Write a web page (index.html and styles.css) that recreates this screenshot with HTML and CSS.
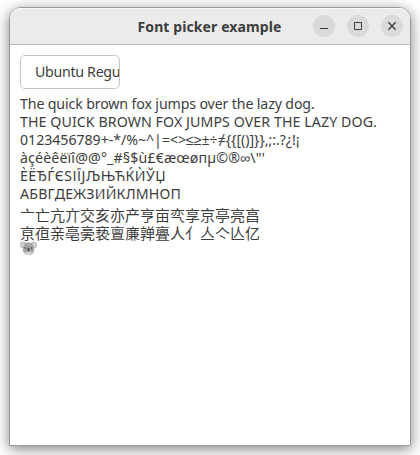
FILE: index.html
```html
<!DOCTYPE html>
<html lang="en">
<head>
<meta charset="utf-8">
<title>Font picker example</title>
<link rel="stylesheet" href="styles.css">
</head>
<body>
<main class="window">
  <header class="titlebar">
    <h1 class="title">Font picker example</h1>
    <div class="controls">
      <button class="control" aria-label="Minimize"><svg viewBox="0 0 22 22"><path d="M7 13.5h8"/></svg></button>
      <button class="control" aria-label="Maximize"><svg viewBox="0 0 22 22"><path d="M7.500 7.500h7v7h-7z"/></svg></button>
      <button class="control" aria-label="Close"><svg viewBox="0 0 22 22"><path d="M7.300 7.300l7.400 7.400M14.700 7.300l-7.400 7.400" stroke-width="1.4"/></svg></button>
    </div>
  </header>
  <section class="content">
    <button class="picker"><span class="picker-label">Ubuntu Regu</span></button>
    <div class="sample">
      <p class="line lower">The quick brown fox jumps over the lazy dog.</p>
      <p class="line upper">THE QUICK BROWN FOX JUMPS OVER THE LAZY DOG.</p>
      <p class="line digits">0123456789+-*/%~^|=&lt;&gt;≤≥±÷≠{{[()]}},;:.?¿!¡</p>
      <p class="line accents">àçéèêëïî@@°_#§$ù£€æœøпµ©®∞\"'</p>
      <p class="line cyrillic-ext">ÈËЂЃЄЅІЇЈЉЊЋЌЍЎЏ</p>
      <p class="line cyrillic">АБВГДЕЖЗИЙКЛМНОП</p>
      <p class="line han han-first">亠亡亢亣交亥亦产亨亩亪享京亭亮亯</p>
      <p class="line han">亰亱亲亳亴亵亶亷亸亹人亻亼亽亾亿</p>
    </div>
    <svg class="koala" viewBox="0 0 17 14" role="img" aria-label="Koala">
      <circle cx="3.4" cy="4" r="3.300" fill="#bababa"/><circle cx="13.600" cy="4" r="3.300" fill="#bababa"/>
      <circle cx="3.200" cy="4" r="2" fill="#dcd6d6"/><circle cx="13.800" cy="4" r="2" fill="#dcd6d6"/>
      <path d="M8.500 1.500C4.800 1.500 2.800 4.200 2.800 8c0 3.500 2.200 5.800 5.700 5.800s5.700-2.300 5.700-5.800c0-3.800-2-6.500-5.700-6.500z" fill="#a6a6a6"/>
      <path d="M5 11.200q3.500-1.500 7 0-1 2.600-3.500 2.600T5 11.200z" fill="#d8d8d8"/>
      <ellipse cx="8.500" cy="8.600" rx="1.200" ry="2.200" fill="#555"/>
      <circle cx="5.400" cy="7" r=".75" fill="#333"/><circle cx="11.600" cy="7" r=".75" fill="#333"/>
    </svg>
  </section>
</main>
</body>
</html>
```

FILE: styles.css
```css
* { box-sizing: border-box; }
body {
  margin: 0;
  height: 455px;
  padding: 7px 9px 9px;
  overflow: hidden;
  background: #fff;
  color: #3d3d3d;
  font: 14.2px/18px "Noto Sans", "Liberation Sans", "DejaVu Sans", "Noto Sans CJK SC", sans-serif;
}
.window {
  height: 439px;
  border: 1px solid #999;
  border-radius: 12px 12px 0 0;
  background: #fff;
  box-shadow: 0 3px 14px rgba(0, 0, 0, .5);
}
.titlebar {
  display: grid;
  grid-template-columns: 1fr auto 1fr;
  align-items: center;
  height: 37px;
  padding: 0 7px;
  border-bottom: 1px solid #bababa;
  border-radius: 11px 11px 0 0;
  background: #ebebeb;
  box-shadow: inset 0 1px #fafafa;
}
.title {
  grid-column: 2;
  margin: 2px 1px 0 0;
  font-size: 14px;
  font-weight: 700;
  line-height: 18px;
  letter-spacing: .1px;
  white-space: nowrap;
}
.controls { display: flex; justify-content: flex-end; gap: 12px; }
.control {
  flex: none;
  width: 22px;
  height: 22px;
  padding: 0;
  border: 0;
  border-radius: 50%;
  background: #dadada;
}
.control svg { display: block; width: 22px; height: 22px; fill: none; stroke: #3d3d3d; }
.content { padding: 10px; }
.picker {
  display: block;
  width: 100px;
  height: 34px;
  padding: 0 0 0 14px;
  overflow: hidden;
  border: 1px solid #c6c6c6;
  border-radius: 5px;
  background: #fff;
  color: inherit;
  font: inherit;
  letter-spacing: -.3px;
  text-align: left;
  white-space: nowrap;
}
.sample { padding-top: 6px; }
.line { margin: 0; height: 18px; white-space: nowrap; }
.lower { letter-spacing: -.14px; }
.upper { letter-spacing: .08px; }
.digits { letter-spacing: -.05px; }
.accents { letter-spacing: .13px; }
.cyrillic-ext { letter-spacing: .47px; }
.cyrillic { letter-spacing: .2px; }
.han { font-family: "Noto Sans CJK SC", sans-serif; font-size: 15px; }
.han-first { margin-top: 3px; }
.koala { display: block; width: 17px; height: 14px; margin-top: -1px; }
```
